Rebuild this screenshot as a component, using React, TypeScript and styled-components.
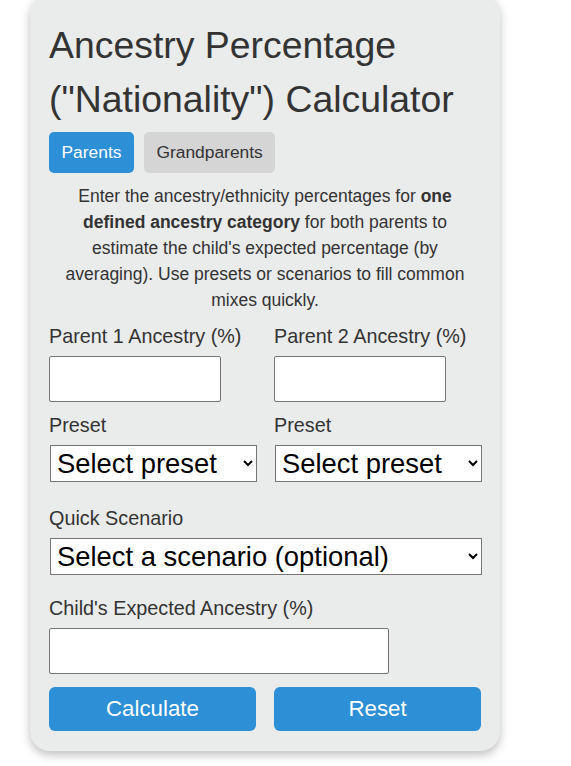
import styled, { createGlobalStyle } from 'styled-components';

const GlobalStyle = createGlobalStyle`
  html, body {
    margin: 0;
    padding: 0;
    background: #ffffff;
    font-family: "Liberation Sans", Arial, sans-serif;
    color: #333333;
  }
`;

const App: React.FC = () => {
  return (
    <>
      <GlobalStyle />
      <Page>
        <Card>
          <Title>Ancestry Percentage ("Nationality") Calculator</Title>
          <Tabs>
            <Tab $active>Parents</Tab>
            <Tab>Grandparents</Tab>
          </Tabs>
          <Description>
            Enter the ancestry/ethnicity percentages for <strong>one defined ancestry category</strong> for
            both parents to estimate the child's expected percentage (by averaging). Use presets or
            scenarios to fill common mixes quickly.
          </Description>

          <TwoCols>
            <Field>
              <Label>Parent 1 Ancestry (%)</Label>
              <TextInput type="text" $width={172} />
            </Field>
            <Field>
              <Label>Parent 2 Ancestry (%)</Label>
              <TextInput type="text" $width={172} />
            </Field>
            <Field>
              <Label>Preset</Label>
              <Select defaultValue="">
                <option value="">Select preset</option>
              </Select>
            </Field>
            <Field>
              <Label>Preset</Label>
              <Select defaultValue="">
                <option value="">Select preset</option>
              </Select>
            </Field>
          </TwoCols>

          <Group $gap={25}>
            <Label>Quick Scenario</Label>
            <Select defaultValue="">
              <option value="">Select a scenario (optional)</option>
            </Select>
          </Group>

          <Group $gap={22}>
            <Label>Child's Expected Ancestry (%)</Label>
            <TextInput type="text" $width={340} />
          </Group>

          <Actions>
            <ActionButton>Calculate</ActionButton>
            <ActionButton>Reset</ActionButton>
          </Actions>
        </Card>
      </Page>
    </>
  );
};

export default App;

const Page = styled.div`
  padding: 0 0 15px 30px;
`;

const Card = styled.div`
  width: 470px;
  box-sizing: border-box;
  margin-top: -6px;
  padding: 24px 19px 20px;
  background: #eaebeb;
  border-radius: 20px;
  box-shadow: 0 4px 10px rgba(0, 0, 0, 0.25);
`;

const Title = styled.h1`
  margin: 0;
  font-size: 37.4px;
  line-height: 54px;
  font-weight: 400;
  color: #333333;
`;

const Tabs = styled.div`
  display: flex;
  gap: 10px;
  margin-top: 6px;
`;

const Tab = styled.button<{ $active?: boolean }>`
  height: 41px;
  padding: 0 12.5px;
  border: none;
  border-radius: 5px;
  font-family: inherit;
  font-size: 17.4px;
  background: ${(p) => (p.$active ? '#2d8fd6' : '#d5d5d5')};
  color: ${(p) => (p.$active ? '#ffffff' : '#333333')};
  cursor: pointer;
`;

const Description = styled.p`
  margin: 10px 0 12px;
  padding: 0 10px;
  text-align: center;
  font-size: 17.5px;
  line-height: 26px;
  color: #333333;

  strong {
    font-weight: 700;
  }
`;

const TwoCols = styled.div`
  display: grid;
  grid-template-columns: 1fr 1fr;
  column-gap: 18px;
  row-gap: 12px;
`;

const Field = styled.div`
  display: flex;
  flex-direction: column;
  align-items: flex-start;
`;

const Group = styled.div<{ $gap: number }>`
  display: flex;
  flex-direction: column;
  align-items: flex-start;
  margin-top: ${(p) => p.$gap}px;
`;

const Label = styled.label`
  display: block;
  font-size: 19.8px;
  line-height: 23px;
  color: #333333;
  margin-bottom: 8px;
`;

const TextInput = styled.input<{ $width: number }>`
  width: ${(p) => p.$width}px;
  height: 46px;
  box-sizing: border-box;
  border: 1px solid #767676;
  border-radius: 2px;
  background: #ffffff;
  font-family: inherit;
  font-size: 18px;
  padding: 0 8px;
`;

const Select = styled.select`
  width: 100%;
  height: 37px;
  box-sizing: border-box;
  margin-left: 1px;
  border: 1px solid #767676;
  border-radius: 0;
  background: #ffffff;
  color: #000000;
  font-family: inherit;
  font-size: 27.4px;
  padding: 0 2px;
`;

const Actions = styled.div`
  display: grid;
  grid-template-columns: 1fr 1fr;
  column-gap: 18px;
  margin-top: 13px;
`;

const ActionButton = styled.button`
  height: 44px;
  border: none;
  border-radius: 6px;
  background: #2d8fd6;
  color: #ffffff;
  font-family: inherit;
  font-size: 22.3px;
  cursor: pointer;
`;
